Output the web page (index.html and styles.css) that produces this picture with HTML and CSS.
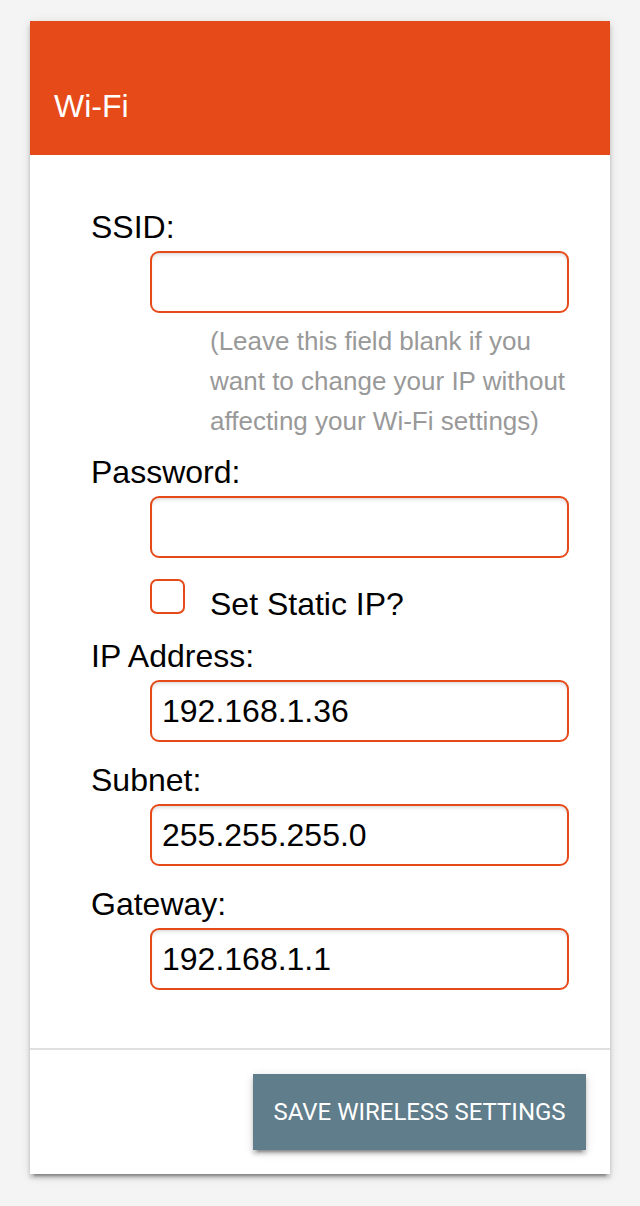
FILE: index.html
```html
<!DOCTYPE html>
<html>
<head>
<meta charset="utf-8">
<link rel="stylesheet" href="styles.css">
</head>
<body>
<div class="card">
  <div class="card-title">Wi-Fi</div>
  <form class="card-body">
    <label class="field-label">SSID:</label>
    <input class="field-input" type="text" value="">
    <p class="help">(Leave this field blank if you want to change your IP without affecting your Wi-Fi settings)</p>
    <label class="field-label gap-help">Password:</label>
    <input class="field-input" type="password" value="">
    <div class="check-row">
      <span class="checkbox"></span>
      <span class="check-text">Set Static IP?</span>
    </div>
    <label class="field-label gap-check">IP Address:</label>
    <input class="field-input" type="text" value="192.168.1.36">
    <label class="field-label gap-input">Subnet:</label>
    <input class="field-input" type="text" value="255.255.255.0">
    <label class="field-label gap-input">Gateway:</label>
    <input class="field-input" type="text" value="192.168.1.1">
  </form>
  <div class="card-actions">
    <button class="btn" type="button">Save Wireless Settings</button>
  </div>
</div>
</body>
</html>
```
FILE: styles.css
```css
html, body {
  margin: 0;
  padding: 0;
  background: #f4f4f4;
  font-family: "Liberation Sans", Arial, sans-serif;
}
body {
  padding: 21px 30px 32px;
}
.card {
  width: 580px;
  background: #fff;
  box-shadow: 0 4px 4px 0 rgba(0,0,0,.2), 0 6px 2px -4px rgba(0,0,0,.25), 0 2px 10px 0 rgba(0,0,0,.12);
}
.card-title {
  height: 134px;
  box-sizing: border-box;
  background: #e64a19;
  color: #fff;
  font-size: 32px;
  line-height: 40px;
  display: flex;
  align-items: flex-end;
  padding: 0 0 29px 24px;
}
.card-body {
  margin: 0;
  padding: 52px 41px 58px 61px;
  display: flex;
  flex-direction: column;
  border-bottom: 2px solid #e0e0e0;
}
.field-label {
  display: block;
  font-size: 32px;
  line-height: 40px;
  color: #000;
  margin-bottom: 4px;
}
.gap-help { margin-top: 11px; }
.gap-check { margin-top: 12px; }
.gap-input { margin-top: 18px; }
.field-input {
  margin: 0 0 0 59px;
  height: 62px;
  box-sizing: border-box;
  border: 2px solid #e64a19;
  border-radius: 9px;
  padding: 0 10px;
  font-family: "Liberation Sans", Arial, sans-serif;
  font-size: 32px;
  color: #000;
  background: #fff;
  box-shadow: inset 0 3px 4px -2px rgba(0,0,0,.18);
  outline: none;
}
.help {
  margin: 8px 0 0 119px;
  font-size: 26px;
  line-height: 40px;
  color: #999;
}
.check-row {
  margin: 21px 0 0 59px;
  display: flex;
  align-items: flex-start;
}
.checkbox {
  width: 35px;
  height: 35px;
  box-sizing: border-box;
  border: 2px solid #e64a19;
  border-radius: 7px;
  background: #fff;
}
.check-text {
  margin: 5px 0 0 25px;
  font-size: 32px;
  line-height: 40px;
  color: #000;
}
.card-actions {
  display: flex;
  justify-content: flex-end;
  padding: 24px 24px 24px;
}
.btn {
  width: 333px;
  height: 76px;
  border: none;
  background: #607d8b;
  color: #fff;
  font-family: Roboto, "Liberation Sans", sans-serif;
  font-size: 24px;
  text-transform: uppercase;
  padding: 0;
  box-shadow: 0 4px 4px 0 rgba(0,0,0,.2), 0 6px 2px -4px rgba(0,0,0,.25), 0 2px 10px 0 rgba(0,0,0,.12);
}
```
